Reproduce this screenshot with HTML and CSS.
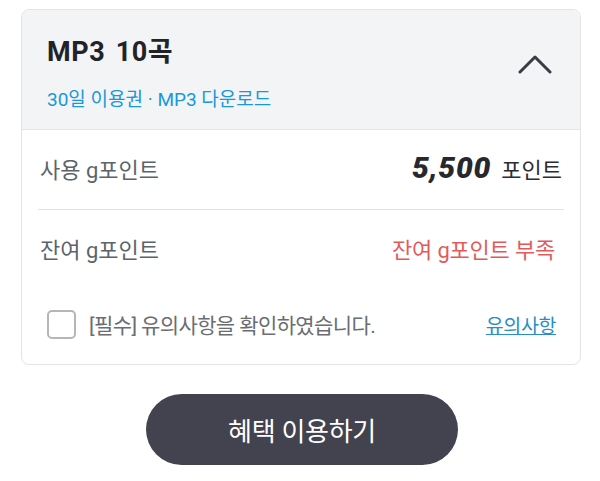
FILE: index.html
```html
<!DOCTYPE html>
<html lang="ko">
<head>
<meta charset="utf-8">
<link rel="stylesheet" href="styles.css">
</head>
<body>
<div class="page">
  <section class="card">
    <header class="card-head">
      <div class="head-text">
        <h1 class="title">MP3 10곡</h1>
        <p class="subtitle">30일 이용권 · MP3 다운로드</p>
      </div>
      <svg class="chev" width="34" height="20" viewBox="0 0 34 20"><path d="M2 18 L17 3 L32 18" fill="none" stroke="#3a3b45" stroke-width="3" stroke-linecap="round" stroke-linejoin="round"/></svg>
    </header>
    <div class="card-body">
      <div class="row row-first">
        <span class="label">사용 g포인트</span>
        <span class="value"><b class="num">5,500</b> <span class="unit">포인트</span></span>
      </div>
      <div class="row">
        <span class="label">잔여 g포인트</span>
        <span class="warn">잔여 g포인트 부족</span>
      </div>
      <div class="agree">
        <label class="check"><span class="box"></span><span class="check-text">[필수] 유의사항을 확인하였습니다.</span></label>
        <a class="link" href="#">유의사항</a>
      </div>
    </div>
  </section>
  <div class="actions">
    <button class="cta">혜택 이용하기</button>
  </div>
</div>
</body>
</html>
```
FILE: styles.css
```css
* { box-sizing: border-box; }
body {
  margin: 0;
  background: #fff;
  font-family: Roboto, "Noto Sans CJK KR", sans-serif;
}
.page {
  padding: 9px 19px 0 21px;
}
.card {
  border: 1px solid #e3e4e6;
  border-radius: 8px;
  overflow: hidden;
  width: 560px;
}
.card-head {
  background: #f3f4f6;
  border-bottom: 1px solid #e3e4e6;
  height: 120px;
  display: flex;
  align-items: flex-start;
  justify-content: space-between;
  padding: 23px 28px 0 25px;
}
.title {
  margin: 0;
  font-size: 27px;
  font-weight: 700;
  color: #222327;
  line-height: 38px;
  letter-spacing: 0.6px;
  word-spacing: 3px;
}
.subtitle {
  margin: 17px 0 0;
  font-size: 19px;
  font-weight: 400;
  color: #1a98d8;
  line-height: 24px;
}
.chev { margin-top: 21px; }
.card-body {
  padding: 0 16px;
}
.row {
  display: flex;
  justify-content: space-between;
  align-items: center;
  height: 80px;
  padding: 0 2px 4px;
}
.row-first {
  border-bottom: 1px solid #e2e3e5;
}
.label {
  font-size: 22px;
  color: #5b646c;
}
.value { display: flex; align-items: baseline; gap: 10px; }
.num {
  font-size: 30px;
  font-style: italic;
  font-weight: 900;
  color: #26282d;
  letter-spacing: 0.8px;
}
.unit { font-size: 22px; color: #2b2d33; }
.warn {
  font-size: 22px;
  color: #e25b5b;
  letter-spacing: -0.2px;
  padding-right: 7px;
}
.agree {
  display: flex;
  justify-content: space-between;
  align-items: center;
  height: 74px;
  padding: 0 8px 6px 9px;
}
.check { display: flex; align-items: center; gap: 13px; }
.box {
  width: 29px;
  height: 29px;
  border: 2px solid #b4b6b9;
  border-radius: 5px;
  background: #fff;
}
.check-text {
  font-size: 21px;
  color: #6a6d72;
  letter-spacing: -0.6px;
}
.link {
  font-size: 19.5px;
  color: #2a8ec4;
  text-decoration: underline;
  letter-spacing: -0.4px;
}
.actions {
  display: flex;
  justify-content: center;
  padding-top: 29px;
  padding-left: 2px;
}
.cta {
  width: 312px;
  height: 71px;
  border: none;
  border-radius: 36px;
  background: #43424f;
  color: #fff;
  font-family: Roboto, "Noto Sans CJK KR", sans-serif;
  font-size: 26px;
  letter-spacing: -0.3px;
}
```
